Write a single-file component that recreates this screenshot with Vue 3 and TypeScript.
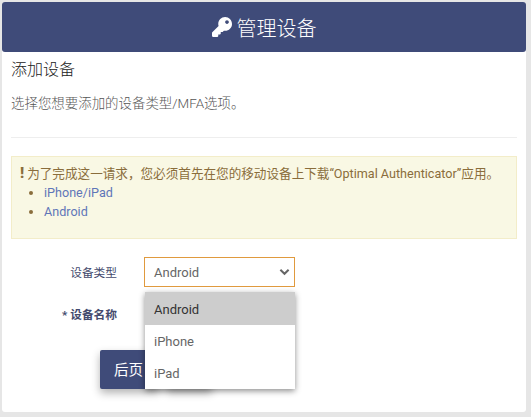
<script setup lang="ts">
const links: string[] = ['iPhone/iPad', 'Android']
const options: string[] = ['Android', 'iPhone', 'iPad']
</script>

<template>
  <div class="page">
    <div class="card">
      <header class="head">
        <svg class="key" viewBox="0 0 512 512" width="20" height="20">
          <path fill="#fff" d="M512 176.001C512 273.203 433.202 352 336 352c-11.22 0-22.19-1.062-32.827-3.069l-24.012 27.014A23.999 23.999 0 0 1 261.223 384H224v40c0 13.255-10.745 24-24 24h-40v40c0 13.255-10.745 24-24 24H24c-13.255 0-24-10.745-24-24v-78.059c0-6.365 2.529-12.47 7.029-16.971l161.802-161.802C163.108 213.814 160 195.271 160 176 160 78.798 238.797.001 335.999 0 433.488-.001 512 78.511 512 176.001zM336 128c0 26.51 21.49 48 48 48s48-21.49 48-48-21.49-48-48-48-48 21.49-48 48z" />
        </svg>
        <span>管理设备</span>
      </header>
      <main class="body">
        <h2 class="title">添加设备</h2>
        <p class="desc">选择您想要添加的设备类型/MFA选项。</p>
        <hr class="rule" />
        <div class="alert">
          <div class="alert-line"><b class="bang">!</b>为了完成这一请求，您必须首先在您的移动设备上下载“Optimal Authenticator”应用。</div>
          <ul class="list">
            <li v-for="l in links" :key="l"><a class="link">{{ l }}</a></li>
          </ul>
        </div>
        <div class="form">
          <div class="row">
            <label class="label">设备类型</label>
            <div class="select-wrap">
              <div class="select">
                <span>Android</span>
                <svg viewBox="0 0 12 8" width="11" height="8"><path d="M1.5 1.5 6 6l4.5-4.5" fill="none" stroke="#666" stroke-width="2.2" /></svg>
              </div>
              <ul class="menu">
                <li v-for="(o, i) in options" :key="o" :class="{ active: i === 0 }">{{ o }}</li>
              </ul>
            </div>
          </div>
          <div class="row second">
            <label class="label strong">* 设备名称</label>
          </div>
          <div class="actions">
            <button class="btn primary">后页</button>
            <button class="btn ghost">取消</button>
          </div>
        </div>
      </main>
    </div>
  </div>
</template>

<style>
html, body { margin: 0; background: #e6e6e6; }
</style>

<style scoped>
.page {
  height: 417px;
  padding: 2px 5px 0 2px;
  box-sizing: border-box;
  font-family: Roboto, "Noto Sans CJK SC", sans-serif;
  overflow: hidden;
}
.card {
  background: #fff;
  height: 410px;
  border-radius: 3px;
}
.head {
  height: 50px;
  background: #3f4b79;
  border-radius: 3px;
  color: #fff;
  font-size: 20px;
  font-weight: 300;
  display: flex;
  align-items: center;
  justify-content: center;
  gap: 5px;
}
.body { padding: 0 9px; }
.title {
  margin: 0;
  padding-top: 8px;
  font-size: 16px;
  font-weight: 300;
  line-height: 20px;
  color: #222;
}
.desc {
  margin: 14px 0 0;
  font-size: 13.44px;
  font-weight: 300;
  line-height: 20px;
  color: #555;
}
.rule {
  border: 0;
  border-top: 1px solid #eee;
  margin: 23px 0 18px;
}
.alert {
  background: #f9f8e4;
  border: 1px solid #f3edc9;
  height: 83px;
  box-sizing: border-box;
  padding: 7px 8px;
  font-size: 12.6px;
  line-height: 19px;
  color: #8a6d3b;
}
.bang { font-weight: 900; margin-right: 3px; font-size: 15px; }
.list { margin: 0; padding-left: 24px; }
.link { color: #5f76b8; }
.form { margin-top: 18px; }
.row { display: flex; align-items: center; height: 30px; }
.second { margin-top: 12px; height: 32px; }
.label {
  width: 106px;
  text-align: right;
  font-size: 11.7px;
  color: #444a6d;
  margin-right: 27px;
  margin-bottom: 2px;
}
.strong { font-weight: 700; margin-bottom: 4px; }
.select-wrap { position: relative; width: 151px; }
.select {
  height: 30px;
  border: 1px solid #e09a3e;
  box-sizing: border-box;
  display: flex;
  align-items: center;
  justify-content: space-between;
  padding: 0 4px 0 9px;
  font-size: 13px;
  color: #666;
}
.menu {
  position: absolute;
  left: 1px;
  top: 35px;
  width: 150px;
  margin: 0;
  padding: 0;
  list-style: none;
  background: #fff;
  box-shadow: 0 2px 6px rgba(0, 0, 0, 0.45);
  z-index: 2;
  font-size: 13px;
  color: #666;
}
.menu li { height: 32px; line-height: 34px; padding-left: 9px; box-sizing: border-box; }
.menu li.active { background: #cdcdcd; color: #333; height: 33px; line-height: 36px; }
.actions { display: flex; gap: 6px; margin-left: 89px; margin-top: 19px; }
.btn {
  height: 39px;
  border: 0;
  border-radius: 2px;
  font: inherit;
  font-size: 14.5px;
  box-shadow: 0 4px 8px rgba(0, 0, 0, 0.3);
  text-align: left;
  padding: 0 0 2px 14px;
}
.primary { background: #3f4b79; color: #fff; width: 60px; }
.ghost { background: #fff; color: #333; width: 46px; }
</style>
